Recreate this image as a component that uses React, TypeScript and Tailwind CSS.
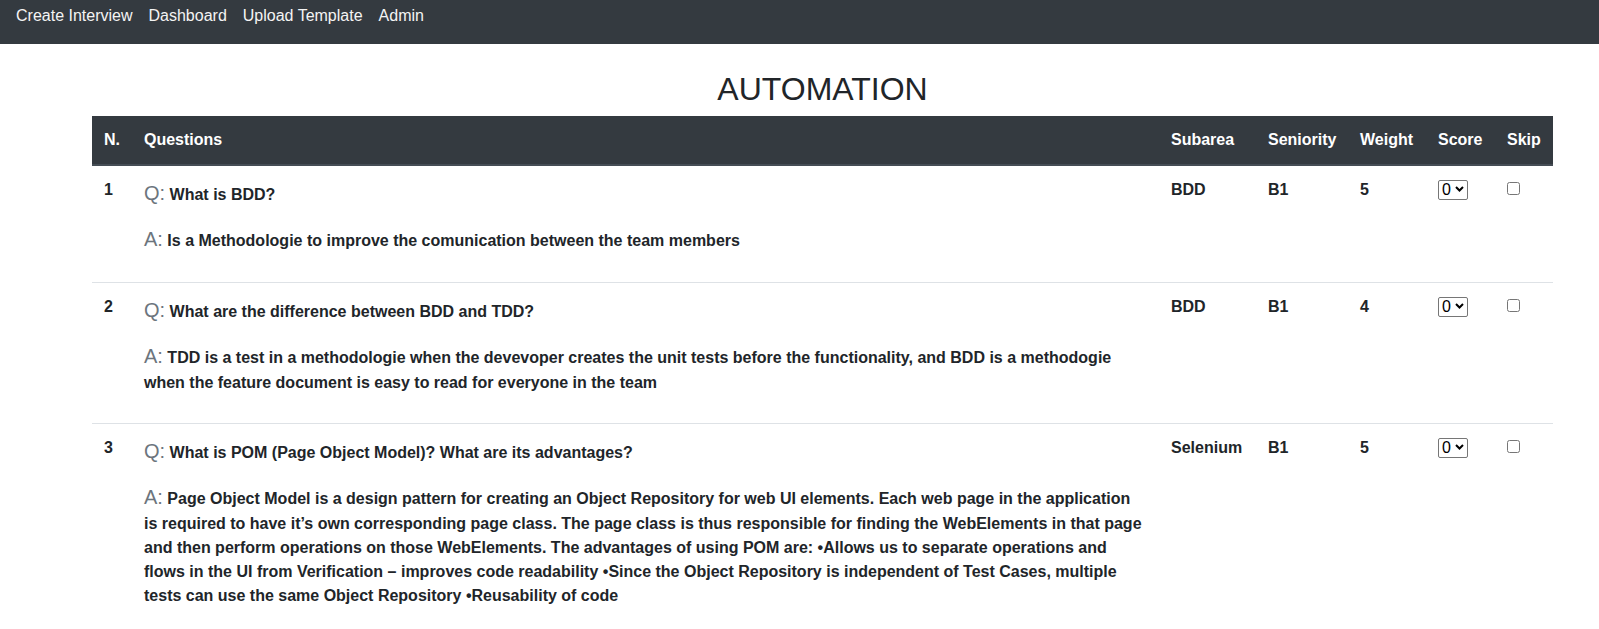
import React from "react";

type Question = {
  n: number;
  q: string;
  a: string;
  subarea: string;
  seniority: string;
  weight: number;
};

const questions: Question[] = [
  {
    n: 1,
    q: "What is BDD?",
    a: "Is a Methodologie to improve the comunication between the team members",
    subarea: "BDD",
    seniority: "B1",
    weight: 5,
  },
  {
    n: 2,
    q: "What are the difference between BDD and TDD?",
    a: "TDD is a test in a methodologie when the devevoper creates the unit tests before the functionality, and BDD is a methodogie when the feature document is easy to read for everyone in the team",
    subarea: "BDD",
    seniority: "B1",
    weight: 4,
  },
  {
    n: 3,
    q: "What is POM (Page Object Model)? What are its advantages?",
    a: "Page Object Model is a design pattern for creating an Object Repository for web UI elements. Each web page in the application is required to have it\u2019s own corresponding page class. The page class is thus responsible for finding the WebElements in that page and then perform operations on those WebElements. The advantages of using POM are: \u2022Allows us to separate operations and flows in the UI from Verification \u2013 improves code readability \u2022Since the Object Repository is independent of Test Cases, multiple tests can use the same Object Repository \u2022Reusability of code",
    subarea: "Selenium",
    seniority: "B1",
    weight: 5,
  },
];

const navLinks = ["Create Interview", "Dashboard", "Upload Template", "Admin"];

function ScoreSelect() {
  return (
    <span className="relative inline-block align-baseline">
      <select
        defaultValue="0"
        className="h-[20px] w-[30px] appearance-none rounded-[2px] border border-[#767676] bg-white pl-[3px] pr-[12px] text-[16px] leading-[18px] font-normal text-black"
      >
        {[0, 1, 2, 3, 4, 5].map((v) => (
          <option key={v} value={v}>
            {v}
          </option>
        ))}
      </select>
      {/* chevron drawn over the native control */}
      <svg
        className="pointer-events-none absolute right-[4px] top-[8px]"
        width="9"
        height="6"
        viewBox="0 0 9 6"
        fill="none"
      >
        <path d="M1 1l3.5 3.5L8 1" stroke="#000" strokeWidth="2" />
      </svg>
    </span>
  );
}

export default function App() {
  return (
    <div className="min-h-screen bg-white font-['Liberation_Sans',Arial,sans-serif] text-[16px] leading-[1.5] text-[#212529]">
      <nav className="flex h-[44px] items-start gap-4 bg-[#343a40] px-4 pt-[4px]">
        {navLinks.map((l) => (
          <a key={l} href="#" className="text-[16px] leading-6 text-[#f4f4f4]">
            {l}
          </a>
        ))}
      </nav>

      <div className="ml-[92px] w-[1461px] pt-[26px]">
        <h2 className="mb-2 text-center text-[32px] leading-[1.2] font-normal text-[#212529]">
          AUTOMATION
        </h2>

        <table className="w-full table-fixed border-collapse">
          <colgroup>
            <col className="w-[40px]" />
            <col className="w-[1027px]" />
            <col className="w-[97px]" />
            <col className="w-[92px]" />
            <col className="w-[78px]" />
            <col className="w-[69px]" />
            <col className="w-[58px]" />
          </colgroup>
          <thead>
            <tr className="bg-[#343a40] text-white">
              {["N.", "Questions", "Subarea", "Seniority", "Weight", "Score", "Skip"].map((h) => (
                <th
                  key={h}
                  className="border-b-2 border-[#454d55] p-3 text-left align-bottom font-bold"
                >
                  {h}
                </th>
              ))}
            </tr>
          </thead>
          <tbody>
            {questions.map((r) => (
              <tr key={r.n} className="font-bold">
                <td className="border-t border-[#dee2e6] p-3 align-top">{r.n}</td>
                <td className="border-t border-[#dee2e6] p-3 align-top">
                  <p className="mb-4">
                    <span className="text-[20px] font-normal text-[#6c757d]">Q:</span> {r.q}
                  </p>
                  <p className="mb-4">
                    <span className="text-[20px] font-normal text-[#6c757d]">A:</span> {r.a}
                  </p>
                </td>
                <td className="border-t border-[#dee2e6] p-3 align-top">{r.subarea}</td>
                <td className="border-t border-[#dee2e6] p-3 align-top">{r.seniority}</td>
                <td className="border-t border-[#dee2e6] p-3 align-top">{r.weight}</td>
                <td className="border-t border-[#dee2e6] p-3 align-top">
                  <ScoreSelect />
                </td>
                <td className="border-t border-[#dee2e6] p-3 align-top">
                  <input type="checkbox" className="h-[13px] w-[13px] align-baseline" />
                </td>
              </tr>
            ))}
          </tbody>
        </table>
      </div>
    </div>
  );
}
